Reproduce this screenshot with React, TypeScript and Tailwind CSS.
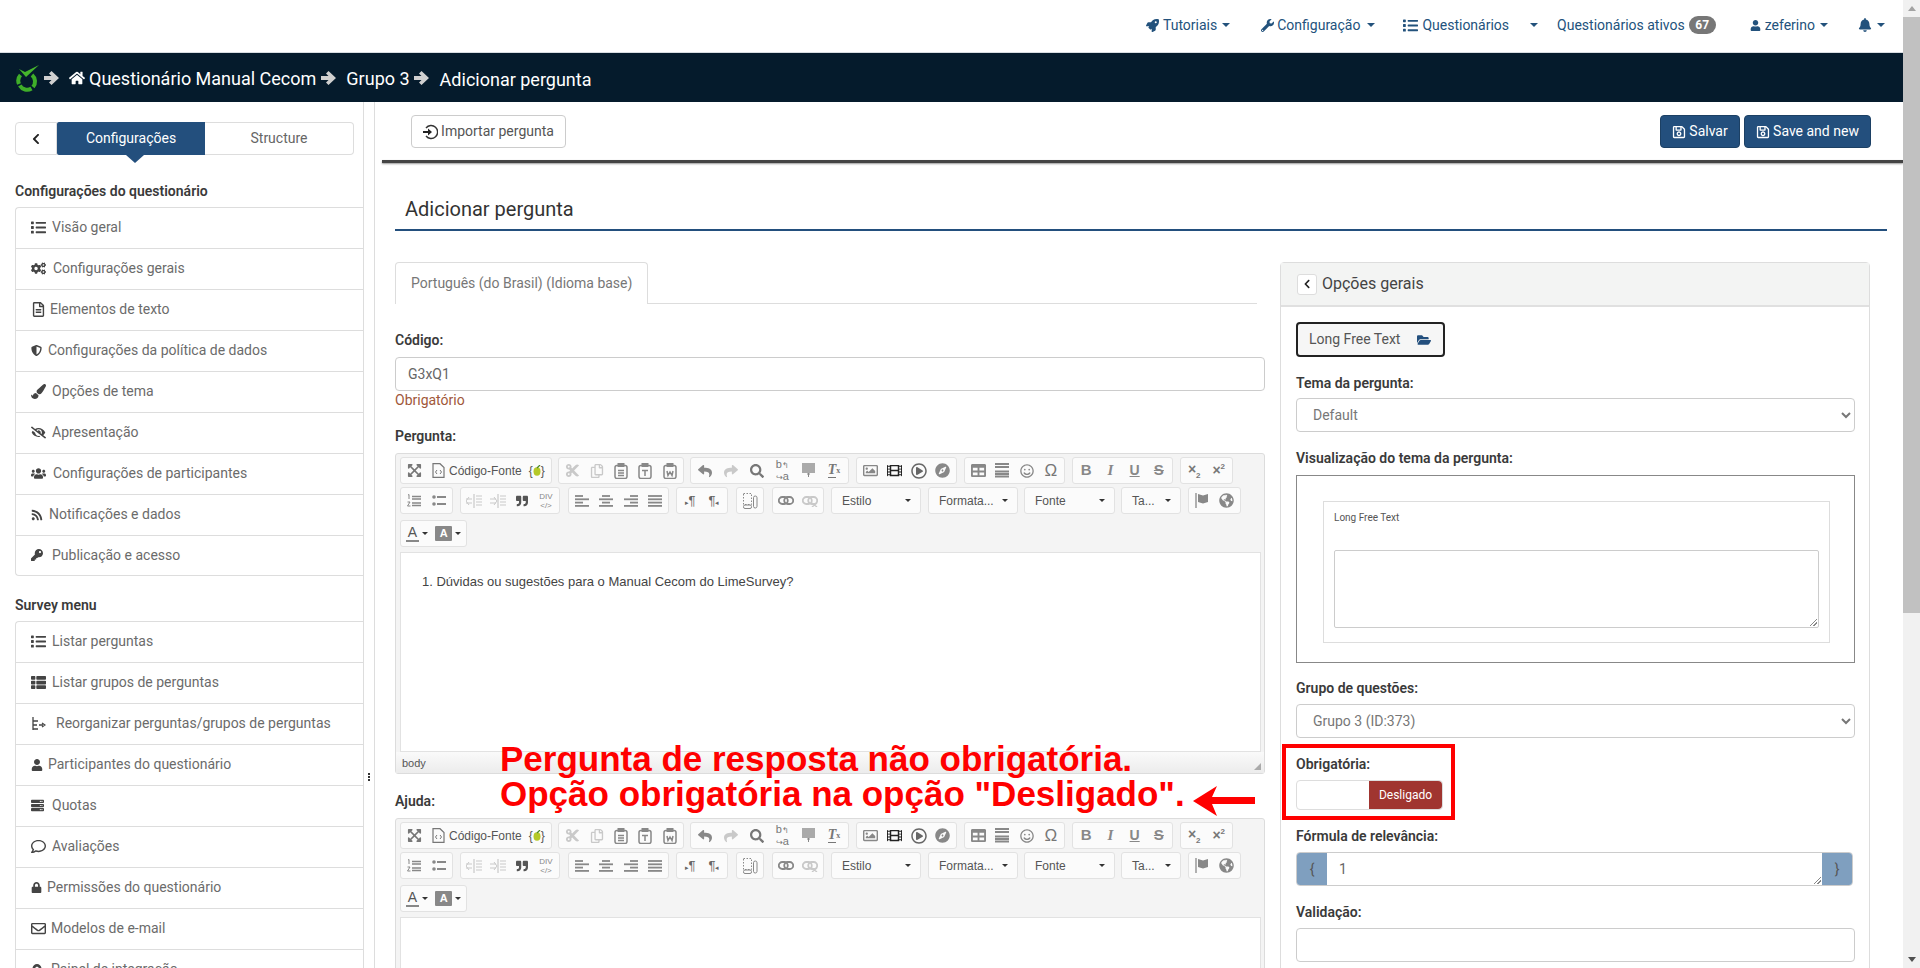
import React from "react";
import {
  FaRocket, FaWrench, FaUser, FaBell, FaHome, FaChevronLeft, FaRegSave, FaFolderOpen, FaCogs, FaRegFileAlt,
  FaShieldAlt, FaPaintBrush, FaEyeSlash, FaUsers, FaRss, FaKey, FaThList, FaRegComment, FaLock, FaRegEnvelope,
  FaList, FaCut, FaRegCopy, FaReply, FaShare, FaSearch, FaRegImage, FaFilm, FaRegPlayCircle, FaCompass,
  FaRegSmile, FaQuoteRight, FaGlobeAmericas, FaExpandArrowsAlt, FaMapMarkerAlt, FaServer, FaTable,
} from "react-icons/fa";

const Caret = ({ cls = "" }: { cls?: string }) => (
  <span className={`inline-block w-0 h-0 border-l-[4px] border-r-[4px] border-t-[4px] border-l-transparent border-r-transparent border-t-[#23527c] ${cls}`} />
);

function NavItem({ icon, text, ml, gap = "ml-[8px]", tg = "ml-[3px]" }: { icon?: React.ReactNode; text?: string; ml: string; gap?: string; tg?: string }) {
  return (
    <div className={`flex items-center ${ml}`}>
      {icon}
      {text && <span className={tg}>{text}</span>}
      <Caret cls={gap} />
    </div>
  );
}

function TopNav() {
  return (
    <div className="h-[53px] shrink-0 bg-white flex items-center justify-end pr-[18px] pb-[2px] text-[14px] text-[#23527c] border-b border-[#d8dde2]">
      <NavItem ml="" tg="ml-[4px]" gap="ml-[5px]" icon={<FaRocket className="text-[13px]" />} text="Tutoriais" />
      <NavItem ml="ml-[31px]" gap="ml-[7px]" icon={<FaWrench className="text-[13px]" />} text="Configuração" />
      <div className="flex items-center ml-[28px]">
        <FaList className="text-[15px]" />
        <span className="ml-[4px]">Questionários</span>
        <Caret cls="ml-[21px]" />
      </div>
      <div className="flex items-center ml-[19px]">
        <span>Questionários ativos</span>
        <span className="ml-[4px] w-[27px] h-[18px] rounded-[9px] bg-[#777] text-white text-[12px] font-bold flex items-center justify-center">67</span>
      </div>
      <NavItem ml="ml-[34px]" tg="ml-[4px]" gap="ml-[5px]" icon={<FaUser className="text-[11px]" />} text="zeferino" />
      <NavItem ml="ml-[30px]" icon={<FaBell className="text-[14px]" />} gap="ml-[5px]" />
    </div>
  );
}

function Logo() {
  return (
    <svg width="26" height="28" viewBox="0 0 26 28" fill="none" className="shrink-0">
      <path d="M5.5 11 A8.5 8.5 0 0 0 4 20" stroke="#3fae29" strokeWidth="4" />
      <path d="M4.8 21.5 A8.5 8.5 0 0 0 16.5 24.5" stroke="#3fae29" strokeWidth="4" />
      <path d="M18 23 A8.5 8.5 0 0 0 17 11" stroke="#3fae29" strokeWidth="4" />
      <path d="M4 5 L10 8 L24 1 L11 13 Z" fill="#46b52c" />
    </svg>
  );
}

const BoldArrow = ({ cls }: { cls: string }) => (
  <svg width="15" height="14" viewBox="0 0 15 14" className={`shrink-0 ${cls}`}>
    <path d="M7.5 0 L15 7 L7.5 14 L5 11.5 L7.5 9 H0 V5 H7.5 L5 2.5 Z" fill="#d0d0d0" />
  </svg>
);

function Breadcrumb() {
  return (
    <div className="h-[49px] shrink-0 bg-[#051b2c] flex items-center text-white text-[18px] pl-[15px] pt-[1px]">
      <Logo />
      <BoldArrow cls="ml-[3px]" />
      <FaHome className="ml-[10px] text-[16px]" />
      <span className="ml-[4px]">Questionário Manual Cecom</span>
      <BoldArrow cls="ml-[5px]" />
      <span className="ml-[10px]">Grupo 3</span>
      <BoldArrow cls="ml-[4px]" />
      <span className="ml-[11px] mt-[2px]">Adicionar pergunta</span>
    </div>
  );
}

const ReorderIcon = () => (
  <svg width="15" height="14" viewBox="0 0 15 14" fill="none" stroke="#444" strokeWidth="1.3">
    <path d="M2 0 V13 M2 4 H7 M2 8 H6 M2 12 H7" />
    <path d="M8 8 H12 M11 6 L14 8 L11 10" />
  </svg>
);

function Row({ icon, text, gap, h = "h-[41px]" }: { icon: React.ReactNode; text: string; gap: string; h?: string }) {
  return (
    <div className={`${h} shrink-0 border-t border-[#ddd] first:border-t-0 flex items-center pl-[15px] pb-[1px] text-[14px] text-[#6b6b6b]`}>
      <span className="w-[16px] flex justify-start text-[#444] text-[15px]">{icon}</span>
      <span className={gap}>{text}</span>
    </div>
  );
}

function ListBox({ children, h }: { children: React.ReactNode; h: string }) {
  return <div className={`border border-r-0 border-[#ddd] rounded-l-[4px] bg-white overflow-hidden flex flex-col ${h}`}>{children}</div>;
}

function Sidebar() {
  return (
    <div className="w-[363px] shrink-0 pl-[15px] pt-[20px] overflow-hidden">
      <div className="flex h-[33px] w-[339px] relative">
        <div className="w-[42px] border border-[#ddd] rounded-l-[4px] flex items-center justify-center text-[#222]"><FaChevronLeft className="text-[12px]" /></div>
        <div className="w-[148px] bg-[#234f7d] text-white text-[14px] flex items-center justify-center rounded-l-[2px]">Configurações</div>
        <div className="flex-1 border border-l-0 border-[#ddd] rounded-r-[4px] text-[14px] text-[#666] flex items-center justify-center">Structure</div>
        <span className="absolute left-[111px] top-[33px] w-0 h-0 border-l-[9px] border-r-[9px] border-t-[8px] border-l-transparent border-r-transparent border-t-[#234f7d]" />
      </div>
      <div className="mt-[26px] h-[26px] text-[14px] font-semibold text-[#3a3a3a] leading-[20px]">Configurações do questionário</div>
      <ListBox h="">
        <Row h="h-[40px]" icon={<FaList />} text="Visão geral" gap="ml-[5px]" />
        <Row icon={<FaCogs />} text="Configurações gerais" gap="ml-[6px]" />
        <Row icon={<FaRegFileAlt />} text="Elementos de texto" gap="ml-[3px]" />
        <Row icon={<FaShieldAlt className="text-[11px]" />} text="Configurações da política de dados" gap="ml-[1px]" />
        <Row icon={<FaPaintBrush />} text="Opções de tema" gap="ml-[5px]" />
        <Row icon={<FaEyeSlash />} text="Apresentação" gap="ml-[5px]" />
        <Row icon={<FaUsers />} text="Configurações de participantes" gap="ml-[6px]" />
        <Row icon={<FaRss className="text-[12px]" />} text="Notificações e dados" gap="ml-[2px]" />
        <Row h="h-[40px]" icon={<FaKey className="text-[12px]" />} text="Publicação e acesso" gap="ml-[5px]" />
      </ListBox>
      <div className="mt-[19px] h-[26px] text-[14px] font-semibold text-[#3a3a3a] leading-[20px]">Survey menu</div>
      <ListBox h="h-[360px]">
        <Row h="h-[40px]" icon={<FaList />} text="Listar perguntas" gap="ml-[5px]" />
        <Row icon={<FaThList />} text="Listar grupos de perguntas" gap="ml-[5px]" />
        <Row icon={<ReorderIcon />} text="Reorganizar perguntas/grupos de perguntas" gap="ml-[9px]" />
        <Row icon={<FaUser className="text-[12px]" />} text="Participantes do questionário" gap="ml-[1px]" />
        <Row icon={<FaServer className="text-[13px]" />} text="Quotas" gap="ml-[5px]" />
        <Row icon={<FaRegComment />} text="Avaliações" gap="ml-[5px]" />
        <Row icon={<FaLock className="text-[11px]" />} text="Permissões do questionário" gap="ml-[0px]" />
        <Row icon={<FaRegEnvelope />} text="Modelos de e-mail" gap="ml-[4px]" />
        <Row icon={<FaMapMarkerAlt className="text-[12px]" />} text="Painel de integração" gap="ml-[4px]" />
      </ListBox>
    </div>
  );
}

const Ic = ({ c, off }: { c: React.ReactNode; off?: boolean }) => (
  <span className={`w-[25px] h-[25px] flex items-center justify-center text-[14px] ${off ? "text-[#c9c9c9]" : "text-[#888]"}`}>{c}</span>
);

const G = ({ w, children, cls = "" }: { w: string; children: React.ReactNode; cls?: string }) => (
  <div className={`h-[27px] ${w} ${cls} shrink-0 bg-[#fbfbfb] border border-[#e2e2e2] rounded-[3px] flex items-center justify-around px-[1px]`}>{children}</div>
);

const Combo = ({ w, text, cls }: { w: string; text: string; cls: string }) => (
  <div className={`h-[27px] ${w} ${cls} shrink-0 bg-[#fbfbfb] border border-[#e2e2e2] rounded-[3px] flex items-center justify-between pl-[10px] pr-[9px] text-[12px] text-[#555]`}>
    <span>{text}</span>
    <span className="w-0 h-0 border-l-[3px] border-r-[3px] border-t-[3px] border-l-transparent border-r-transparent border-t-[#333]" />
  </div>
);

const Sv = ({ children, w = 16, h = 16 }: { children: React.ReactNode; w?: number; h?: number }) => (
  <svg width={w} height={h} viewBox={`0 0 ${w} ${h}`} fill="none" stroke="currentColor">{children}</svg>
);

const Paste = ({ l }: { l: string }) => (
  <Sv w={14} h={16}>
    <rect x="1" y="2.5" width="12" height="13" rx="2" strokeWidth="1.5" />
    <rect x="4" y="0.5" width="6" height="3" fill="currentColor" strokeWidth="1" />
    <path d={l} strokeWidth="1.5" />
  </Sv>
);

const Lines = ({ rows }: { rows: [number, number][] }) => (
  <Sv w={14} h={14}>
    {rows.map(([a, b], i) => <path key={i} d={`M${a} ${2 + i * 3.3} H${b}`} strokeWidth="1.8" />)}
  </Sv>
);

const IndentIcon = ({ flip }: { flip?: boolean }) => (
  <Sv w={16} h={14}>
    <path d="M8 0 V14 M10 2 H16 M10 5 H16 M10 8 H16 M10 11 H16 M0 5 H6 M0 9 H6" strokeWidth="1.2" />
    <path d={flip ? "M4 3 L7 7 L4 11" : "M3 3 L0 7 L3 11"} strokeWidth="1" />
  </Sv>
);

const LinkIcon = ({ x }: { x?: boolean }) => (
  <Sv w={16} h={12}>
    <rect x="0.8" y="2" width="9" height="7" rx="3.5" strokeWidth="1.8" />
    <rect x="6.2" y="2" width="9" height="7" rx="3.5" strokeWidth="1.8" />
    {x && <path d="M10 8 L15 12 M15 8 L10 12" strokeWidth="1.4" />}
  </Sv>
);

function Toolbar() {
  return (
    <div className="flex flex-col gap-[4px] px-[4px] pt-[3px] h-[98px] font-['Liberation_Sans',sans-serif]">
      <div className="flex">
        <div className="h-[27px] w-[152px] shrink-0 bg-[#fbfbfb] border border-[#e2e2e2] rounded-[3px] flex items-center pl-[6px]">
          <FaExpandArrowsAlt className="text-[15px] text-[#777]" />
          <span className="ml-[10px] text-[#777]">
            <Sv w={13} h={15}><path d="M1 0.7 H8 L12 4.5 V14.3 H1 Z" strokeWidth="1.2" /><path d="M5 7 L3.5 9 L5 11 M8 7 L9.5 9 L8 11" strokeWidth="1" /></Sv>
          </span>
          <span className="ml-[4px] text-[12px] text-[#555] whitespace-nowrap">Código-Fonte</span>
          <span className="ml-[7px] text-[12px] text-[#555] whitespace-nowrap flex items-center">{"{"}<svg width="8" height="11" viewBox="0 0 8 11"><ellipse cx="4" cy="6.5" rx="3.5" ry="4.2" fill="#b5c928" /><path d="M4 3 L7 0" stroke="#4a8a2a" strokeWidth="1.2" /></svg>{"}"}</span>
        </div>
        <G w="w-[126px]" cls="ml-[6px]">
          <Ic off c={<FaCut className="text-[15px]" />} /><Ic off c={<FaRegCopy />} />
          <Ic c={<Paste l="M4 7.5 H10 M4 10 H10 M4 12.5 H10" />} /><Ic c={<Paste l="M4 7.5 H10 M7 7.5 V13" />} /><Ic c={<Paste l="M4 8 L5 12.5 L7 9 L9 12.5 L10 8" />} />
        </G>
        <G w="w-[159px]" cls="ml-[6px]">
          <Ic c={<FaReply />} /><Ic off c={<FaShare />} /><Ic c={<FaSearch className="text-[#777]" />} />
          <Ic c={<span className="text-[11px] leading-[10px] text-center text-[#777]">b<span className="text-[8px]">↰</span><br /><span className="text-[8px]">↪</span>a</span>} />
          <Ic c={<Sv w={13} h={15}><rect x="0" y="0" width="13" height="10" fill="#aaa" stroke="none" /><path d="M5 11 H8 M6.5 10 V14" strokeWidth="1" /></Sv>} />
          <Ic c={<span className="italic font-bold text-[14px] font-['Liberation_Serif',serif] text-[#777] leading-[14px] flex items-end"><span className="border-b border-[#777]">T</span><span className="text-[8px] not-italic">x</span></span>} />
        </G>
        <G w="w-[101px]" cls="ml-[7px]">
          <Ic c={<FaRegImage className="text-[15px]" />} /><Ic c={<FaFilm className="text-[#222] text-[15px]" />} /><Ic c={<FaRegPlayCircle className="text-[#666] text-[16px]" />} /><Ic c={<FaCompass className="text-[15px]" />} />
        </G>
        <G w="w-[101px]" cls="ml-[7px]">
          <Ic c={<FaTable className="text-[15px]" />} />
          <Ic c={<Sv w={14} h={15}><path d="M0 1 H14 M0 4 H14 M0 8.5 H14 M0 11 H14 M0 13.5 H14" strokeWidth="1.8" /></Sv>} />
          <Ic c={<FaRegSmile />} /><Ic c={<span className="text-[17px] text-[#777]">Ω</span>} />
        </G>
        <G w="w-[101px]" cls="ml-[7px]">
          <Ic c={<span className="text-[15px] font-bold">B</span>} />
          <Ic c={<span className="text-[15px] italic font-['Liberation_Serif',serif] font-bold">I</span>} />
          <Ic c={<span className="text-[14px] underline font-bold">U</span>} />
          <Ic c={<span className="text-[15px] line-through font-bold">S</span>} />
        </G>
        <G w="w-[53px]" cls="ml-[7px]">
          <Ic c={<span className="text-[14px] font-bold text-[#777]">×<span className="text-[8px] align-sub">2</span></span>} />
          <Ic c={<span className="text-[14px] font-bold text-[#777]">×<span className="text-[8px] align-super">2</span></span>} />
        </G>
      </div>
      <div className="flex -mt-[1px]">
        <G w="w-[53px]">
          <Ic c={<Sv w={14} h={13}><path d="M5 2.5 H14 M5 5 H14 M5 9 H14 M5 11.5 H14" strokeWidth="1.5" /><path d="M1 1 L2 0.5 V5 M0.5 8 H3 L0.5 12 H3.5" strokeWidth="1" /></Sv>} />
          <Ic c={<Sv w={14} h={13}><path d="M5 3 H14 M5 10 H14" strokeWidth="2" /><circle cx="2" cy="3" r="1.8" fill="currentColor" stroke="none" /><circle cx="2" cy="10" r="1.8" fill="currentColor" stroke="none" /></Sv>} />
        </G>
        <G w="w-[100px]" cls="ml-[7px]">
          <Ic off c={<IndentIcon />} /><Ic off c={<IndentIcon flip />} /><Ic c={<FaQuoteRight className="text-[#555] text-[12px]" />} />
          <Ic c={<span className="text-[8px] leading-[9px] text-center">DIV<br />{"</>"}</span>} />
        </G>
        <G w="w-[101px]" cls="ml-[8px]">
          <Ic c={<Lines rows={[[0, 8], [0, 14], [0, 8], [0, 14]]} />} />
          <Ic c={<Lines rows={[[3, 11], [0, 14], [3, 11], [0, 14]]} />} />
          <Ic c={<Lines rows={[[6, 14], [0, 14], [6, 14], [0, 14]]} />} />
          <Ic c={<Lines rows={[[0, 14], [0, 14], [0, 14], [0, 14]]} />} />
        </G>
        <G w="w-[52px]" cls="ml-[7px]">
          <Ic c={<span className="text-[13px] text-[#666] whitespace-nowrap"><span className="text-[7px]">▸</span>¶</span>} />
          <Ic c={<span className="text-[13px] text-[#666] whitespace-nowrap">¶<span className="text-[7px]">◂</span></span>} />
        </G>
        <G w="w-[28px]" cls="ml-[8px]">
          <Ic c={<Sv w={15} h={16}><rect x="0.5" y="0.5" width="8" height="11" strokeDasharray="1.5 1.5" /><rect x="0.5" y="12" width="8" height="3.5" rx="1.5" /><rect x="10.5" y="3" width="3.5" height="12" rx="1.7" /></Sv>} />
        </G>
        <G w="w-[52px]" cls="ml-[8px]"><Ic c={<LinkIcon />} /><Ic off c={<LinkIcon x />} /></G>
        <Combo w="w-[90px]" cls="ml-[7px]" text="Estilo" />
        <Combo w="w-[90px]" cls="ml-[7px]" text="Formata..." />
        <Combo w="w-[91px]" cls="ml-[6px]" text="Fonte" />
        <Combo w="w-[60px]" cls="ml-[6px]" text="Ta..." />
        <G w="w-[53px]" cls="ml-[7px]">
          <Ic c={<Sv w={14} h={15}><path d="M1 0 V15" strokeWidth="1.3" /><path d="M3 1 L8 2.5 L13 1 V9 L8 10.5 L3 9 Z" fill="currentColor" stroke="none" /></Sv>} />
          <Ic c={<FaGlobeAmericas className="text-[15px]" />} />
        </G>
      </div>
      <div className="flex mt-[2px]">
        <G w="w-[67px]">
          <span className="flex items-center gap-[3px] text-[#555] text-[14px]"><span className="border-b-2 border-[#888] leading-[15px] px-[2px]">A</span><span className="w-0 h-0 border-l-[3px] border-r-[3px] border-t-[3px] border-l-transparent border-r-transparent border-t-[#333]" /></span>
          <span className="flex items-center gap-[3px]"><span className="w-[17px] h-[15px] bg-[#888] text-white text-[11px] font-bold flex items-center justify-center rounded-[1px]">A</span><span className="w-0 h-0 border-l-[3px] border-r-[3px] border-t-[3px] border-l-transparent border-r-transparent border-t-[#333]" /></span>
        </G>
      </div>
    </div>
  );
}

function Editor({ h, text, status }: { h: string; text?: string; status?: boolean }) {
  return (
    <div className={`border border-[#dcdcdc] rounded-[3px] bg-[#f4f4f4] flex flex-col ${h}`}>
      <Toolbar />
      <div className="ml-[4px] mr-[3px] flex-1 min-h-0 bg-white border border-[#e2e2e2] pl-[21px] pt-[20px] font-['Liberation_Sans',sans-serif] text-[13px] text-[#444] leading-[18px]">{text}</div>
      {status && <div className="h-[21px] shrink-0 bg-linear-to-b from-[#fafafa] to-[#ececec] flex items-center justify-between pl-[6px] pr-[3px] pt-[1px] font-['Liberation_Sans',sans-serif] text-[11px] text-[#555]"><span>body</span><span className="mt-[6px] w-0 h-0 border-b-[7px] border-l-[7px] border-l-transparent border-b-[#aaa]" /></div>}
    </div>
  );
}

const Label = ({ children, cls = "" }: { children: React.ReactNode; cls?: string }) => (
  <div className={`text-[14px] font-semibold text-[#3a3a3a] leading-[20px] ${cls}`}>{children}</div>
);

function LeftForm() {
  return (
    <div className="w-[870px] shrink-0">
      <div className="h-[42px] w-[862px] border-b border-[#ddd] relative">
        <div className="absolute left-0 top-0 w-[253px] h-[42px] border border-b-0 border-[#ddd] rounded-t-[4px] bg-white flex items-center pl-[15px] text-[14px] text-[#777]">Português (do Brasil) (Idioma base)</div>
      </div>
      <Label cls="mt-[26px]">Código:</Label>
      <div className="mt-[7px] h-[34px] border border-[#ccc] rounded-[4px] flex items-center pl-[12px] text-[14px] text-[#666]">G3xQ1</div>
      <div className="h-[20px] mt-[-1px] text-[14px] leading-[20px] text-[#a0573a]">Obrigatório</div>
      <Label cls="mt-[16px]">Pergunta:</Label>
      <div className="mt-[7px]"><Editor h="h-[321px]" text="1. Dúvidas ou sugestões para o Manual Cecom do LimeSurvey?" status /></div>
      <Label cls="mt-[17px]">Ajuda:</Label>
      <div className="mt-[7px]"><Editor h="h-[200px]" /></div>
    </div>
  );
}

const Sel = ({ v }: { v: string }) => (
  <select defaultValue={v} className="block w-[559px] h-[34px] border border-[#ccc] rounded-[4px] bg-white pl-[12px] text-[14px] text-[#777]"><option>{v}</option></select>
);

const Grip = () => <span className="absolute right-[1px] bottom-[1px] w-[7px] h-[7px] bg-[linear-gradient(135deg,transparent_45%,#888_45%,#888_55%,transparent_55%,transparent_70%,#888_70%,#888_80%,transparent_80%)]" />;

function RightPanel() {
  return (
    <div className="w-[590px] h-[800px] shrink-0 border border-[#ddd] rounded-t-[4px] relative">
      <div className="h-[44px] bg-[#f3f4f3] border-b-2 border-[#e0e0e0] flex items-center pl-[16px]">
        <div className="w-[20px] h-[21px] bg-white border border-[#ddd] rounded-[3px] flex items-center justify-center text-[#222]"><FaChevronLeft className="text-[10px]" /></div>
        <span className="ml-[5px] text-[16px] text-[#444]">Opções gerais</span>
      </div>
      <div className="pl-[15px] pt-[15px]">
        <div className="w-[149px] h-[35px] bg-[#f6f6f6] border-2 border-[#222] rounded-[4px] flex items-center pl-[11px] text-[14px] text-[#555]">
          <span>Long Free Text</span>
          <FaFolderOpen className="ml-[17px] text-[14px] text-[#234f7d]" />
        </div>
        <Label cls="mt-[16px]">Tema da pergunta:</Label>
        <div className="mt-[5px]"><Sel v="Default" /></div>
        <Label cls="mt-[16px]">Visualização do tema da pergunta:</Label>
        <div className="mt-[7px] w-[559px] h-[188px] border border-[#888] pl-[26px] pt-[25px]">
          <div className="w-[507px] h-[142px] border border-[#ddd] pl-[10px] pt-[8px]">
            <div className="text-[10px] text-[#555] leading-[16px]">Long Free Text</div>
            <div className="mt-[24px] w-[485px] h-[78px] border border-[#ccc] rounded-[2px] relative"><Grip /></div>
          </div>
        </div>
        <Label cls="mt-[15px]">Grupo de questões:</Label>
        <div className="mt-[6px]"><Sel v="Grupo 3 (ID:373)" /></div>
        <Label cls="mt-[16px]">Obrigatória:</Label>
        <div className="mt-[6px] w-[147px] h-[30px] border border-[#ddd] rounded-[4px] flex justify-end">
          <div className="w-[73px] h-full bg-[#a03530] rounded-r-[4px] text-white text-[12px] flex items-center justify-center">Desligado</div>
        </div>
        <Label cls="mt-[16px]">Fórmula de relevância:</Label>
        <div className="mt-[6px] w-[557px] h-[34px] border border-[#ccc] rounded-[4px] flex overflow-hidden">
          <div className="w-[30px] bg-[#7f9fbf] text-[#555] text-[14px] flex items-center justify-center">{"{"}</div>
          <div className="flex-1 pl-[12px] text-[14px] text-[#666] flex items-center relative">1<Grip /></div>
          <div className="w-[30px] bg-[#7f9fbf] text-[#555] text-[14px] flex items-center justify-center">{"}"}</div>
        </div>
        <Label cls="mt-[16px]">Validação:</Label>
        <div className="mt-[6px] w-[559px] h-[34px] border border-[#ccc] rounded-[4px]" />
      </div>
    </div>
  );
}

function Annotation() {
  return (
    <>
      <div className="absolute left-[1282px] top-[744px] w-[173px] h-[76px] border-[4px] border-[#f00] pointer-events-none" />
      <div className="absolute left-[500px] top-[741px] font-['Liberation_Sans',sans-serif] font-bold text-[35px] leading-[35px] text-[#f00] whitespace-nowrap">
        <div>Pergunta de resposta não obrigatória.</div>
        <div>Opção obrigatória na opção "Desligado".</div>
      </div>
      <svg width="62" height="30" viewBox="0 0 62 30" className="absolute left-[1193px] top-[786px]">
        <path d="M0 15 L24 0 L19 11 L62 11 L62 18 L19 18 L24 30 Z" fill="#f00" />
      </svg>
    </>
  );
}

const ImportIcon = () => (
  <svg width="15" height="16" viewBox="0 0 15 16" fill="none" className="mr-[3px] shrink-0">
    <path d="M3 4 A6.5 6.5 0 1 1 3 12" stroke="#333" strokeWidth="1.4" />
    <path d="M0 7 H5 V4.5 L9 8 L5 11.5 V9 H0 Z" fill="#222" />
  </svg>
);

function Main() {
  return (
    <div className="flex-1 min-w-0 overflow-hidden flex flex-col">
      <div className="h-[58px] shrink-0 flex items-start justify-between pl-[36px] pr-[32px] pt-[13px]">
        <div className="w-[155px] h-[33px] border border-[#ccc] rounded-[4px] flex items-center justify-center text-[14px] text-[#555]">
          <ImportIcon />Importar pergunta
        </div>
        <div className="flex gap-[4px]">
          <div className="w-[80px] h-[33px] bg-[#234f7d] rounded-[4px] text-white text-[14px] flex items-center justify-center border border-[#1c4064]"><FaRegSave className="text-[14px] mr-[3px]" />Salvar</div>
          <div className="w-[127px] h-[33px] bg-[#234f7d] rounded-[4px] text-white text-[14px] flex items-center justify-center border border-[#1c4064]"><FaRegSave className="text-[14px] mr-[3px]" />Save and new</div>
        </div>
      </div>
      <div className="ml-[7px] h-[3px] shrink-0 bg-[#444] shadow-[0_1px_2px_rgba(0,0,0,0.4)]" />
      <div className="pl-[20px]">
        <div className="mt-[30px] h-[38px] border-b-2 border-[#234f7d] pl-[10px] text-[20px] text-[#333] leading-[32px] w-[1492px]">Adicionar pergunta</div>
        <div className="mt-[31px] flex gap-[15px]">
          <LeftForm />
          <RightPanel />
        </div>
      </div>
    </div>
  );
}

function ScrollBar() {
  return (
    <div className="w-[17px] h-full bg-[#f1f1f1] flex flex-col items-center shrink-0">
      <div className="h-[17px] flex items-center"><span className="w-0 h-0 border-l-[4px] border-r-[4px] border-b-[5px] border-l-transparent border-r-transparent border-b-[#a3a3a3]" /></div>
      <div className="w-full h-[596px] bg-[#c1c1c1]" />
      <div className="flex-1" />
      <div className="h-[17px] flex items-center"><span className="w-0 h-0 border-l-[4px] border-r-[4px] border-t-[5px] border-l-transparent border-r-transparent border-t-[#505050]" /></div>
    </div>
  );
}

export default function App() {
  return (
    <div className="relative w-[1920px] h-[968px] overflow-hidden flex bg-white font-['Roboto',sans-serif]">
      <div className="w-[1903px] h-full flex flex-col">
        <TopNav />
        <Breadcrumb />
        <div className="flex flex-1 min-h-0">
          <Sidebar />
          <div className="w-[12px] shrink-0 border-x border-[#ddd] relative">
            <span className="absolute left-[4px] top-[671px] w-[3px] h-[10px] flex flex-col gap-[1px]">
              <span className="w-[2px] h-[2px] bg-[#333]" /><span className="w-[2px] h-[2px] bg-[#333]" /><span className="w-[2px] h-[2px] bg-[#333]" />
            </span>
          </div>
          <Main />
        </div>
      </div>
      <ScrollBar />
      <Annotation />
    </div>
  );
}
